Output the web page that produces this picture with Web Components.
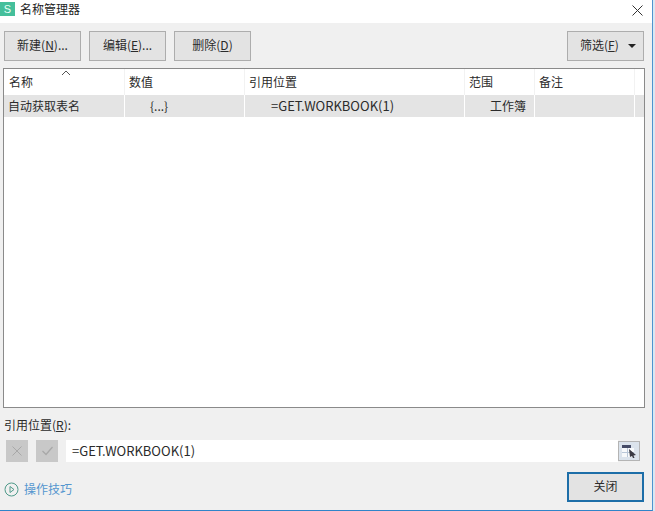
<!DOCTYPE html>
<html>
<head>
<meta charset="utf-8">
<style>
  html, body { margin: 0; padding: 0; background: #dbe7f2; }
  body { width: 655px; height: 511px; overflow: hidden; font: 12px "Noto Sans CJK SC", "Noto Sans", sans-serif; color: #2b2b2b; }
</style>
</head>
<body>
<name-manager></name-manager>

<template id="tpl-btn">
  <style>
    :host { display: flex; align-items: center; justify-content: center; box-sizing: border-box; height: 30px; padding-bottom: 3px; background: #e3e3e3; border: 1px solid #adadad; font-size: 12px; color: #2b2b2b; }
    :host([primary]) { border: 2px solid #1d6ea8; }
  </style>
  <slot></slot>
</template>

<template id="tpl-titlebar">
  <style>
    :host { display: flex; align-items: flex-start; height: 23px; box-sizing: border-box; padding: 2px 9px 0 0; background: #fff; }
    .logo { width: 15px; height: 14px; background: #45bf9b; color: #e8fff6; font: 11px/14px "Liberation Sans", sans-serif; text-align: center; margin-right: 5px; }
    .title { flex: 1; font-size: 12px; line-height: 14px; color: #222; }
    svg { display: block; margin-top: 3px; }
  </style>
  <div class="logo">S</div>
  <div class="title"><slot></slot></div>
  <svg width="11" height="11" viewBox="0 0 11 11"><path d="M.5 .5 L10.500 10.500 M10.500 .5 L.5 10.500" stroke="#333" fill="none"/></svg>
</template>

<template id="tpl-table">
  <style>
    :host { display: block; box-sizing: border-box; height: 340px; margin: 0 7px 0 3px; background: #fff; border: 1px solid #8a8a8a; position: relative; font-size: 12px; color: #2b2b2b; }
    .row { display: grid; grid-template-columns: 121px 120px 220px 70px 100px; }
    .row > div { display: flex; align-items: center; box-sizing: border-box; padding: 0 0 2px 4px; border-right: 1px solid #f2f2f2; }
    .head { height: 26px; }
    .head > div:first-child { padding-left: 5px; }
    .body { height: 22px; background: #e4e4e4; }
    .body > div { border-right: 1px solid #fff; }
    .latin { font-size: 13px; }
    .c { padding-left: 25px !important; }
    .f { padding-left: 26px !important; }
    .r { justify-content: flex-end; padding-right: 8px !important; }
    .sort { position: absolute; left: 57px; top: 1px; }
  </style>
  <div class="row head"><div>名称</div><div>数值</div><div>引用位置</div><div>范围</div><div>备注</div></div>
  <div class="row body"><div>自动获取表名</div><div class="c">{...}</div><div class="f latin">=GET.WORKBOOK(1)</div><div class="r">工作簿</div><div></div></div>
  <svg class="sort" width="10" height="6" viewBox="0 0 10 6"><path d="M1 5 L5 1 L9 5" stroke="#555" fill="none"/></svg>
</template>

<template id="tpl-manager">
  <style>
    :host { display: block; width: 655px; height: 511px; box-sizing: border-box; padding-right: 2px; }
    .win { display: flex; flex-direction: column; height: 511px; box-sizing: border-box; background: #f0f0f0; border-right: 1px solid #4f94cf; border-bottom: 1px solid #2f84c9; }
    .tools { display: flex; gap: 8px; padding: 8px 8px 7px 4px; }
    .tools .sp { flex: 1; }
    .n { width: 77px; }
    .filter { width: 77px; justify-content: flex-start; padding-left: 12px; gap: 9px; }
    .caret { width: 0; height: 0; margin-top: 3px; border: 4px solid transparent; border-top: 4px solid #222; border-bottom: 0; }
    .label { padding: 8px 0 0 4px; height: 24px; font-size: 12px; color: #2b2b2b; }
    .ref { display: flex; align-items: center; gap: 8px; padding: 0 12px 0 6px; height: 22px; }
    .sq { width: 22px; height: 22px; background: #c8c8c8; display: flex; align-items: center; justify-content: center; flex: none; }
    .input { flex: 1; height: 22px; margin-right: -8px; background: #fff; display: flex; align-items: center; padding: 0 0 1px 6px; box-sizing: border-box; font-size: 13px; color: #2b2b2b; }
    .pick { display: block; flex: none; margin-left: 0; }
    .foot { flex: 1; display: flex; align-items: flex-start; padding: 10px 8px 0 4px; gap: 5px; }
    .help { display: block; margin-top: 10px; }
    .link { flex: 1; margin-top: 8px; color: #5496cf; font-size: 12px; }
    .close { width: 77px; }
  </style>
  <div class="win">
    <mgr-titlebar>名称管理器</mgr-titlebar>
    <div class="tools">
      <mgr-btn class="n">新建(<u>N</u>)...</mgr-btn>
      <mgr-btn class="n">编辑(<u>E</u>)...</mgr-btn>
      <mgr-btn class="n">删除(<u>D</u>)</mgr-btn>
      <div class="sp"></div>
      <mgr-btn class="filter"><span>筛选(<u>F</u>)</span><span class="caret"></span></mgr-btn>
    </div>
    <mgr-table></mgr-table>
    <div class="label">引用位置(<u>R</u>):</div>
    <div class="ref">
      <div class="sq"><svg width="12" height="12" viewBox="0 0 12 12"><path d="M1.500 1.500 L10.500 10.500 M10.500 1.500 L1.500 10.500" stroke="#a8a8a8" fill="none"/></svg></div>
      <div class="sq"><svg width="13" height="12" viewBox="0 0 13 12"><path d="M1.500 6 L5 9.500 L11.500 2" stroke="#a8a8a8" stroke-width="1.300" fill="none"/></svg></div>
      <div class="input">=GET.WORKBOOK(1)</div>
      <svg class="pick" width="22" height="20" viewBox="0 0 22 20">
        <rect x=".5" y=".5" width="21" height="19" fill="#dbe3ec" stroke="#b4b4b4"/>
        <rect x="4" y="4" width="9" height="3" fill="#444a66"/><rect x="4" y="7" width="12" height="9" fill="#f7f9fb"/>
        <path d="M4 11.500 H16 M9.500 7 V16" stroke="#b9c7d8"/>
        <path d="M11 8 L18 14 L15.500 14.500 L16.500 17 L15 17 L14 15 L12 16 Z" fill="#3a3a44"/>
      </svg>
    </div>
    <div class="foot">
      <svg class="help" width="15" height="15" viewBox="0 0 15 15"><circle cx="7.500" cy="7.500" r="6.500" fill="none" stroke="#4f9a8a"/><path d="M6 4.500 L10 7.500 L6 10.500 Z" fill="none" stroke="#4f9a8a"/></svg>
      <div class="link">操作技巧</div>
      <mgr-btn class="close" primary>关闭</mgr-btn>
    </div>
  </div>
</template>

<script>
  // Each element clones its own template into an open shadow root
  function define(tag, tplId) {
    customElements.define(tag, class extends HTMLElement {
      constructor() {
        super();
        const t = document.getElementById(tplId);
        this.attachShadow({ mode: 'open' }).appendChild(t.content.cloneNode(true));
      }
    });
  }
  define('mgr-btn', 'tpl-btn');
  define('mgr-titlebar', 'tpl-titlebar');
  define('mgr-table', 'tpl-table');
  define('name-manager', 'tpl-manager');
</script>
</body>
</html>
